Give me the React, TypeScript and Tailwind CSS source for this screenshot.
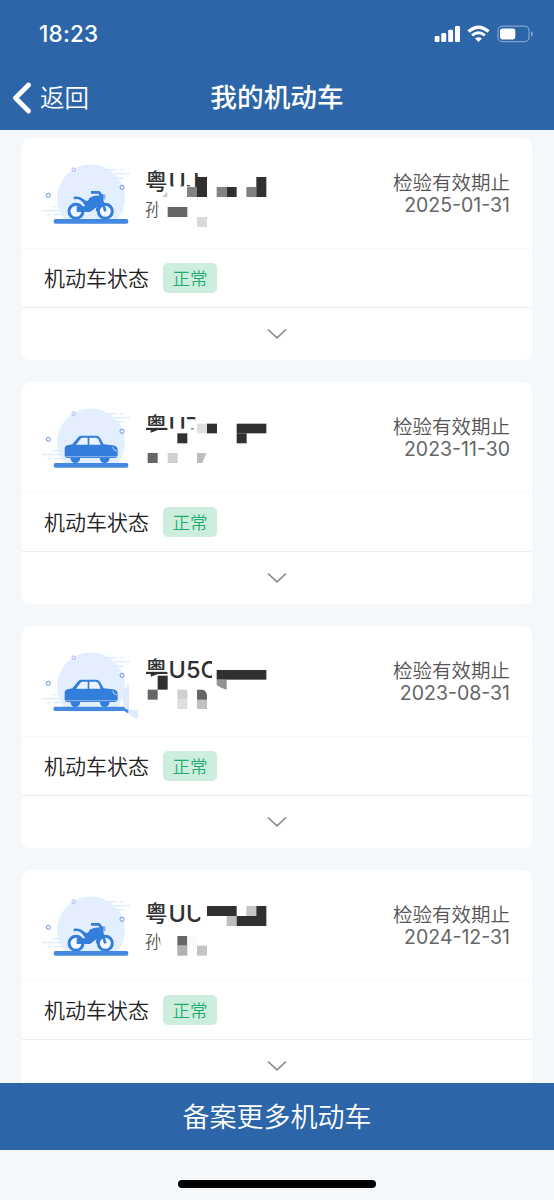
import React from "react";

type VehicleKind = "motorcycle" | "car";

/** x, y, width, height, fill */
type Block = [number, number, number, number, string];

interface Vehicle {
  kind: VehicleKind;
  plate: string;
  owner?: string;
  validUntil: string;
  status: string;
  blocks: Block[];
  shapes?: { d: string; fill: string }[];
  smudged?: boolean;
}

const VEHICLES: Vehicle[] = [
  {
    kind: "motorcycle",
    plate: "UJ",
    owner: "孙",
    validUntil: "2025-01-31",
    status: "正常",
    blocks: [
      [446, 139, 80, 34, "#fff"],
      [496, 92, 26, 43, "#fff"],
      [534, 92, 40, 80, "#fff"],
      [501, 141, 30, 30, "#828282"],
      [531, 111, 30, 60, "#303030"],
      [590, 141, 30, 30, "#828282"],
      [620, 141, 30, 30, "#303030"],
      [679, 141, 30, 30, "#828282"],
      [709, 111, 30, 60, "#303030"],
      [416, 176, 28, 62, "#fff"],
      [443, 201, 59, 30, "#666"],
      [531, 231, 30, 30, "#dadada"],
    ],
    shapes: [{ d: "M442 155V171H427Z", fill: "#c4c4c4" }],
  },
  {
    kind: "car",
    plate: "U7",
    validUntil: "2023-11-30",
    status: "正常",
    blocks: [
      [370, 130, 76, 46, "#fff"],
      [446, 134, 100, 38, "#fff"],
      [497, 110, 60, 22, "#fff"],
      [526, 92, 30, 70, "#fff"],
      [514, 132, 5, 5, "#888"],
      [531, 119, 30, 29, "#e0e0e0"],
      [561, 119, 30, 29, "#303030"],
      [472, 148, 30, 30, "#303030"],
      [650, 119, 89, 29, "#303030"],
      [650, 148, 30, 30, "#303030"],
      [383, 207, 30, 30, "#666"],
      [443, 207, 30, 30, "#d0d0d0"],
    ],
    shapes: [
      { d: "M378 132H442V138H414L392 146V138H378Z", fill: "#303030" },
      { d: "M531 207H559L547 237H531Z", fill: "#bdbdbd" },
    ],
  },
  {
    kind: "car",
    plate: "U5C",
    validUntil: "2023-08-31",
    status: "正常",
    smudged: true,
    blocks: [
      [370, 130, 74, 39, "#fff"],
      [576, 92, 30, 70, "#fff"],
      [413, 143, 30, 42, "#303030"],
      [383, 185, 30, 30, "#666"],
      [590, 126, 149, 29, "#303030"],
      [472, 185, 30, 30, "#d0d0d0"],
      [472, 215, 30, 28, "#dedede"],
      [531, 215, 30, 28, "#c0c0c0"],
    ],
    shapes: [
      { d: "M378 132H442V138H414L392 146V138H378Z", fill: "#303030" },
      { d: "M531 185H549Q559 189 561 201V215H531Z", fill: "#666" },
      { d: "M590 155H620V185Q604 182 590 171Z", fill: "#929292" },
    ],
  },
  {
    kind: "motorcycle",
    plate: "UU",
    owner: "孙",
    validUntil: "2024-12-31",
    status: "正常",
    blocks: [
      [517, 92, 40, 43, "#fff"],
      [541, 92, 20, 70, "#fff"],
      [561, 102, 89, 30, "#303030"],
      [620, 132, 30, 30, "#bdbdbd"],
      [679, 102, 30, 30, "#c6c6c6"],
      [709, 102, 30, 30, "#303030"],
      [650, 132, 89, 30, "#303030"],
      [421, 176, 30, 62, "#fff"],
      [472, 192, 30, 29, "#666"],
      [502, 192, 28, 29, "#fafafa"],
      [472, 221, 30, 30, "#b0b0b0"],
      [531, 221, 30, 30, "#c4c4c4"],
    ],
  },
];

function StatusIcons() {
  return (
    <svg width="100" height="18" viewBox="0 0 100 18" fill="none">
      <g fill="#fff">
        <rect x="0.7" y="11" width="4.8" height="6" rx="1.2" />
        <rect x="7.3" y="8" width="4.9" height="9" rx="1.2" />
        <rect x="14.2" y="4.8" width="4.9" height="12.2" rx="1.2" />
        <rect x="21" y="1" width="5" height="16" rx="1.2" />
        <path d="M44.5 17 41 13.6Q44.5 10.8 48 13.6Z" />
      </g>
      <path d="M34.5 6.5Q44.5-2 54.5 6.5" stroke="#fff" strokeWidth="3.4" />
      <path d="M38.1 10.4Q44.5 5.1 50.9 10.4" stroke="#fff" strokeWidth="3" />
      <rect x="64" y="1.2" width="31" height="15.4" rx="4.2" stroke="#7fa1cc" strokeWidth="1.3" />
      <rect x="66" y="3.4" width="15.3" height="11" rx="2.3" fill="#fff" />
      <path d="M97 6.4Q99.2 7.2 99.2 9T97 11.6Z" fill="#7fa1cc" />
    </svg>
  );
}

function Motorcycle() {
  return (
    <g>
      <circle cx="168" cy="214" r="21" stroke="#347edb" strokeWidth="9" fill="#f5f9ff" />
      <circle cx="256" cy="214" r="21" stroke="#347edb" strokeWidth="9" fill="#f5f9ff" />
      <path d="M161 174Q179 171 187 180T205 186" stroke="#347edb" strokeWidth="8" fill="none" />
      <path d="M213 157H234Q240 157 241 164L256 214" stroke="#347edb" strokeWidth="8" fill="none" strokeLinejoin="round" />
      <path d="M186 184Q201 191 209 173Q226 164 238 167L246 190L210 216H170V199H196Z" fill="#347edb" />
      <path d="M231 214Q231 192 252 190" stroke="#347edb" strokeWidth="7" fill="none" />
      <rect x="239" y="163" width="12" height="16" rx="2" fill="#347edb" />
      <rect x="251" y="163" width="5" height="15" fill="#7fb0ee" />
    </g>
  );
}

function Car() {
  return (
    <g>
      <path d="M134 194Q134 184 147 183L157 181 175 159Q178 155 184 155H229Q236 155 240 161L251 181 278 184Q293 186 293 198V213Q293 222 284 222H143Q134 222 134 213Z" fill="#347edb" />
      <path d="M168 182 183 163Q185 161 188 161H203V182ZM208 161H227Q232 161 235 166L242 182H208Z" fill="#eaf3ff" />
      <path d="M136 218H291" stroke="#bcd7fa" strokeWidth="2" />
      <path d="M278 188Q279 200 291 201" stroke="#cfe2fc" strokeWidth="2.5" fill="none" />
      <path d="M151 222H181Q179 237 166 237T151 222ZM239 222H269Q267 237 254 237T239 222Z" fill="#347edb" />
    </g>
  );
}

function VehicleArt({ kind, smudged }: { kind: VehicleKind; smudged?: boolean }) {
  return (
    <svg className="shrink-0" width="100" height="70" viewBox="60 66 300 210">
      <g stroke="#dceafd" strokeWidth="4" strokeLinecap="round">
        <path d="M250 89H291M301 89H309M270 101H328M285 114H309" />
        <path d="M98 200H125M67 212H130M84 224H91M102 224H130" />
      </g>
      <circle cx="213" cy="175" r="102" fill="#e3efff" />
      <circle cx="161" cy="89" r="5.5" fill="#eeebff" stroke="#aaa6f0" strokeWidth="2.5" />
      <circle cx="306" cy="142" r="6" fill="#fff" stroke="#5a93df" strokeWidth="3" />
      <circle cx="85" cy="166" r="6" fill="#fff" stroke="#5a93df" strokeWidth="3" />
      <path d="M80 251H345V290H80Z" fill="#fff" />
      {smudged && <path d="M309 178Q321 186 322 168H327V245H354V273Q337 270 326 254L309 238Z" fill="#dfebfd" />}
      {kind === "motorcycle" ? <Motorcycle /> : <Car />}
      {smudged ? (
        <path d="M106 236H309Q315 236 316 242L325 245V256Q318 254 314 249H106Q100 249 100 242.5T106 236Z" fill="#4389e2" />
      ) : (
        <rect x="101" y="237" width="224" height="14" rx="6" fill="#4389e2" />
      )}
    </svg>
  );
}

function VehicleCard({ vehicle }: { vehicle: Vehicle }) {
  const { kind, plate, owner, validUntil, status, blocks, shapes, smudged } = vehicle;
  return (
    <section className="h-[222px] shrink-0 overflow-hidden rounded-lg bg-white">
      <div className="relative flex h-[111px] border-b border-[#f6f7f8] pt-6 pr-[22px] pl-[18px]">
        <VehicleArt kind={kind} smudged={smudged} />
        <div className="ml-[5px] flex flex-col pt-[5px]">
          <div className="flex h-[30px] items-center text-[22.5px] font-medium whitespace-nowrap text-[#303030]">
            <span>粤</span>
            <span className="ml-px text-[23.5px]">{plate}</span>
          </div>
          {owner && <span className="h-6 pt-px text-[17px] leading-6 font-[350] text-[#555]">{owner}</span>}
        </div>
        <div className="ml-auto flex flex-col items-end pt-[10px] text-[19.5px] text-[#666]">
          <span className="h-[22px] leading-[23px] font-[350] text-[#555]">检验有效期止</span>
          <span className="leading-[23px]">{validUntil}</span>
        </div>
        {/* privacy mosaic over plate and owner */}
        <svg className="absolute top-0 left-0" width="260" height="110" viewBox="6 -6 780 330">
          {blocks.map(([x, y, w, h, fill], i) => (
            <rect key={i} x={x} y={y} width={w} height={h} fill={fill} />
          ))}
          {shapes?.map((s) => <path key={s.d} d={s.d} fill={s.fill} />)}
        </svg>
      </div>
      <div className="flex h-[59px] items-center border-b border-[#eceef0] pl-[22px]">
        <span className="pt-px text-[21px] font-[350] text-[#222]">机动车状态</span>
        <span className="ml-[14px] flex h-[30px] w-[54px] items-center justify-center rounded-[5px] bg-[#cdeedf] pt-[3px] text-[17.5px] font-[350] text-[#1fae69]">
          {status}
        </span>
      </div>
      <div className="flex h-[51px] items-center justify-center">
        <svg width="20" height="12" viewBox="0 0 20 12" fill="none" stroke="#888" strokeWidth="1.6">
          <path d="M1 1.5 10 9.8 19 1.5" />
        </svg>
      </div>
    </section>
  );
}

export default function App() {
  return (
    <div className="flex h-[1200px] w-[554px] flex-col overflow-hidden bg-[#f4f8fa] font-['Inter','Noto_Sans_CJK_SC',sans-serif]">
      <header className="h-[130px] shrink-0 bg-[#2c65a8] text-white">
        <div className="flex h-[66px] items-center justify-between pt-[2px] pr-[20px] pl-[39px]">
          <span className="text-[22.5px] font-[550] tracking-[0.2px]">18:23</span>
          <StatusIcons />
        </div>
        <div className="grid h-[64px] grid-cols-[1fr_auto_1fr] items-center pl-3">
          <div className="flex items-center gap-[8px]">
            <svg width="20" height="32" viewBox="0 0 20 32" fill="none" stroke="#fff" strokeWidth="4.8" strokeLinecap="round" strokeLinejoin="round">
              <path d="M16.5 3 3.5 16 16.5 29" />
            </svg>
            <span className="text-[24.5px] font-[350]">返回</span>
          </div>
          <h1 className="-ml-3 pb-[2px] text-[26.7px] font-medium">我的机动车</h1>
        </div>
      </header>
      <main className="flex min-h-0 flex-1 flex-col gap-[22px] overflow-hidden px-[22px] pt-2">
        {VEHICLES.map((v) => <VehicleCard key={v.validUntil} vehicle={v} />)}
      </main>
      <button className="h-[67px] shrink-0 bg-[#2c65a8] pt-[3px] text-[27px] font-[350] text-white">备案更多机动车</button>
      <footer className="flex h-[50px] shrink-0 justify-center pt-[30px]">
        <div className="h-2 w-[198px] rounded-full bg-black" />
      </footer>
    </div>
  );
}
